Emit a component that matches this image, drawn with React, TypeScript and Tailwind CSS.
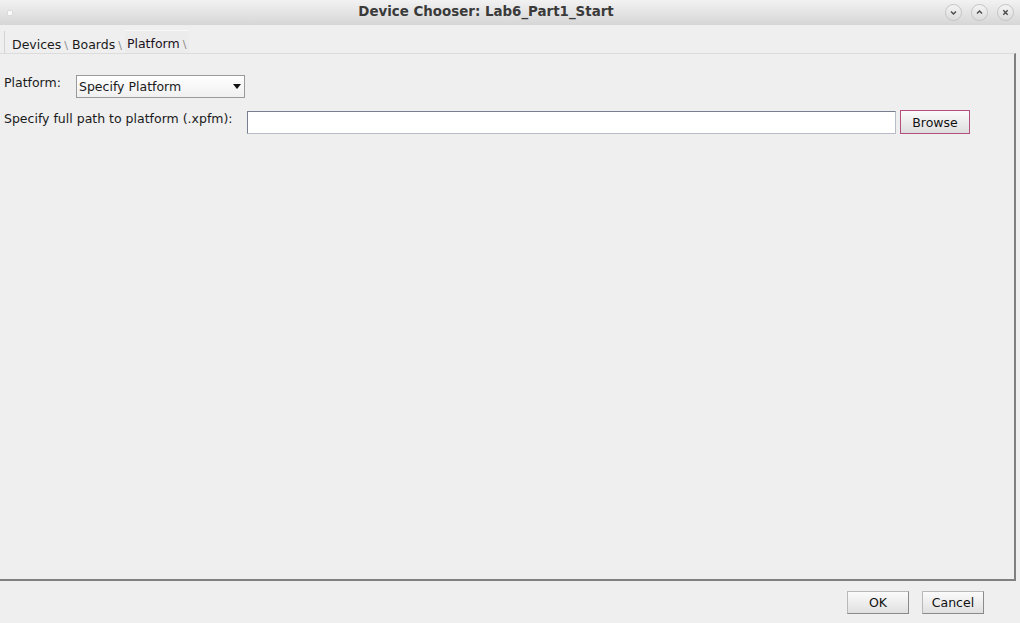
import React from 'react'

const font = { fontFamily: '"DejaVu Sans", sans-serif' }

function TitleButton({ kind }: { kind: 'down' | 'up' | 'close' }) {
  return (
    <div className="w-[17px] h-[17px] rounded-full border border-[#c4c4c4] bg-gradient-to-b from-[#f4f4f4] to-[#dcdcdc] flex items-center justify-center">
      <svg width="9" height="9" viewBox="0 0 9 9" fill="none" stroke="#4a4a4a" strokeWidth="1.4">
        {kind === 'down' && <path d="M2 3.5 L4.5 6 L7 3.5" />}
        {kind === 'up' && <path d="M2 5.5 L4.5 3 L7 5.5" />}
        {kind === 'close' && <path d="M2.3 2.3 L6.7 6.7 M6.7 2.3 L2.3 6.7" />}
      </svg>
    </div>
  )
}

function Slash() {
  return <span className="text-[#8a8a8a] text-[11px] mx-[3px] mt-[2px]">\</span>
}

export default function App() {
  return (
    <div className="w-[1020px] h-[623px] bg-[#efefef] flex flex-col overflow-hidden text-[#1a1a1a]" style={font}>
      {/* title bar */}
      <div className="h-[25px] bg-gradient-to-b from-[#f2f2f2] to-[#d6d6d6] flex items-center px-[7px] shrink-0">
        <div className="w-[6px] h-[6px] rounded-[1px] bg-[#fafafa] border border-[#dadada]" />
        <div className="flex-1 text-center text-[13.4px] font-bold text-[#3a3a3a] pl-[14px]">
          Device Chooser: Lab6_Part1_Start
        </div>
        <div className="flex gap-[9px] mr-[-1px]">
          <TitleButton kind="down" />
          <TitleButton kind="up" />
          <TitleButton kind="close" />
        </div>
      </div>

      {/* tabs */}
      <div className="h-[28px] flex items-end pl-[4px] text-[12.5px] shrink-0">
        <div className="h-[22px] flex items-center pt-[6px] pl-[7px] border-l border-[#d4d4d4]">
          <span>Devices</span>
          <Slash />
        </div>
        <div className="h-[22px] flex items-center pt-[6px] pl-[1px]">
          <span>Boards</span>
          <Slash />
        </div>
        <div className="h-[23px] flex items-center pt-[5px] pl-[2px] bg-[#ececec] border-t border-[#f8f8f8]">
          <span className="text-[#1a1020]">Platform</span>
          <Slash />
        </div>
      </div>

      {/* panel */}
      <div className="h-[528px] w-[1016px] border-t border-t-[#dcdcdc] border-r-2 border-r-[#808080] border-b-2 border-b-[#808080] bg-[#efefef] shrink-0 pt-[21px] pl-[4px] text-[12.5px]">
        <div className="flex items-center h-[23px]">
          <span className="w-[72px] -mt-[7px]">Platform:</span>
          <div className="w-[169px] h-[23px] border border-[#9a9a9a] bg-gradient-to-b from-[#ffffff] to-[#f0f0f0] flex items-center pl-[2px] pr-[3px]">
            <span className="flex-1 pt-[1px]">Specify Platform</span>
            <svg width="8" height="5" viewBox="0 0 8 5">
              <path d="M0 0 H8 L4 5 Z" fill="#111" />
            </svg>
          </div>
        </div>
        <div className="flex items-start mt-[13px]">
          <span className="w-[243px] -mt-[1px]">Specify full path to platform (.xpfm):</span>
          <div className="w-[649px] h-[23px] bg-white border border-[#7a7f90] border-b-[#b8bcc8] border-r-[#b8bcc8]" />
          <button
            className="ml-[4px] -mt-[1px] w-[70px] h-[24px] pt-[2px] border border-[#b24f7f] bg-gradient-to-b from-[#fbfbfb] to-[#dedede] text-[12.5px] text-[#111]"
            style={font}
          >
            Browse
          </button>
        </div>
      </div>

      {/* footer */}
      <div className="flex justify-end gap-[13px] pr-[36px] pt-[10px] text-[12.5px]">
        <button
          className="w-[62px] h-[23px] pt-[1px] border border-[#b8b8b8] border-r-[#8a8a8a] border-b-[#8a8a8a] bg-gradient-to-b from-[#fbfbfb] to-[#e0e0e0] text-[#111]"
          style={font}
        >
          OK
        </button>
        <button
          className="w-[62px] h-[23px] pt-[1px] border border-[#b8b8b8] border-r-[#8a8a8a] border-b-[#8a8a8a] bg-gradient-to-b from-[#fbfbfb] to-[#e0e0e0] text-[#111]"
          style={font}
        >
          Cancel
        </button>
      </div>
    </div>
  )
}
